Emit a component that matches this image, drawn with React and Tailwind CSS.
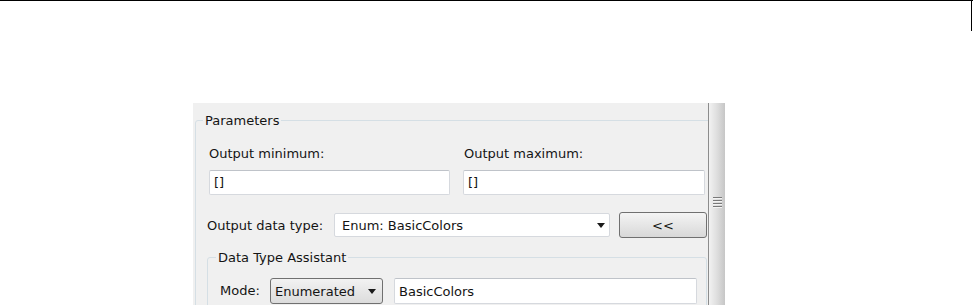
import { useState } from "react";

function Arrow() {
  return (
    <svg width="8" height="5" viewBox="0 0 8 5" className="shrink-0">
      <path d="M0 0 H8 L4 5 Z" fill="#1a1a1a" />
    </svg>
  );
}

function TextBox({ value, className }) {
  return (
    <div
      className={`h-[25px] bg-white border border-[#d6d9de] border-t-[#bfc3c9] rounded-[2px] flex items-center pl-[4px] ${className}`}
    >
      {value}
    </div>
  );
}

function App() {
  const [mode] = useState("Enumerated");

  return (
    <div className="w-[973px] h-[305px] overflow-hidden bg-white font-['DejaVu_Sans',sans-serif] text-[13px] leading-[15px] text-[#141414]">
      {/* page rule */}
      <div className="h-[31px] border-t border-black flex justify-end">
        <div className="w-px bg-black mr-px" />
      </div>

      {/* dialog pane */}
      <div className="mt-[72px] ml-[193px] flex h-[202px]">
        <div className="w-[515px] h-full bg-[#f0f0f0] overflow-hidden pt-[10px] pl-[2px]">
          <fieldset className="w-[540px] h-[240px] border border-[#d5dfe5] rounded-[3px] pl-[12px]">
            <legend className="-ml-[5px] px-[2px]">Parameters</legend>

            <div className="grid grid-cols-[242px_242px] gap-x-[13px] mt-[18px]">
              <div className="pl-px">Output minimum:</div>
              <div className="pl-px">Output maximum:</div>
              <TextBox value="[]" className="mt-[9px] ml-px" />
              <TextBox value="[]" className="mt-[9px]" />
            </div>

            <div className="flex items-center mt-[17px] -ml-px">
              <span className="w-[127px]">Output data type:</span>
              <div className="w-[276px] h-[24px] bg-white border border-[#d6d9de] rounded-[2px] flex items-center justify-between pl-[7px] pr-[4px]">
                <span>Enum: BasicColors</span>
                <Arrow />
              </div>
              <button className="ml-[9px] w-[88px] h-[26px] border border-[#707070] rounded-[3px] bg-gradient-to-b from-[#f4f4f4] to-[#d8d8d8] flex items-center justify-center">
                &lt;&lt;
              </button>
            </div>

            <fieldset className="mt-[12px] -ml-px w-[500px] h-[80px] border border-[#d5dfe5] rounded-[3px] pl-[12px]">
              <legend className="-ml-[4px] px-[2px]">Data Type Assistant</legend>
              <div className="flex items-start mt-[13px]">
                <span className="w-[50px] mt-[5px]">Mode:</span>
                <div className="w-[113px] h-[26px] border border-[#707070] rounded-[3px] bg-gradient-to-b from-[#f2f2f2] to-[#dcdcdc] flex items-center justify-between pl-[4px] pr-[6px]">
                  <span>{mode}</span>
                  <Arrow />
                </div>
                <TextBox value="BasicColors" className="ml-[11px] w-[303px] h-[26px]" />
              </div>
            </fieldset>
          </fieldset>
        </div>

        {/* scrollbar */}
        <div className="w-[17px] h-full border-l border-[#8c8c8c] bg-gradient-to-r from-[#f2f2f2] via-[#dedede] to-[#c6c6c6] flex flex-col items-center pt-[94px]">
          <div className="flex flex-col gap-[1px] ml-px">
            <div className="w-[9px] h-[2px] bg-[#7a7a7a] border-b border-[#f4f4f4]" />
            <div className="w-[9px] h-[2px] bg-[#7a7a7a] border-b border-[#f4f4f4]" />
            <div className="w-[9px] h-[2px] bg-[#7a7a7a] border-b border-[#f4f4f4]" />
            <div className="w-[9px] h-[2px] bg-[#7a7a7a] border-b border-[#f4f4f4]" />
          </div>
        </div>
      </div>
    </div>
  );
}

export default App;
